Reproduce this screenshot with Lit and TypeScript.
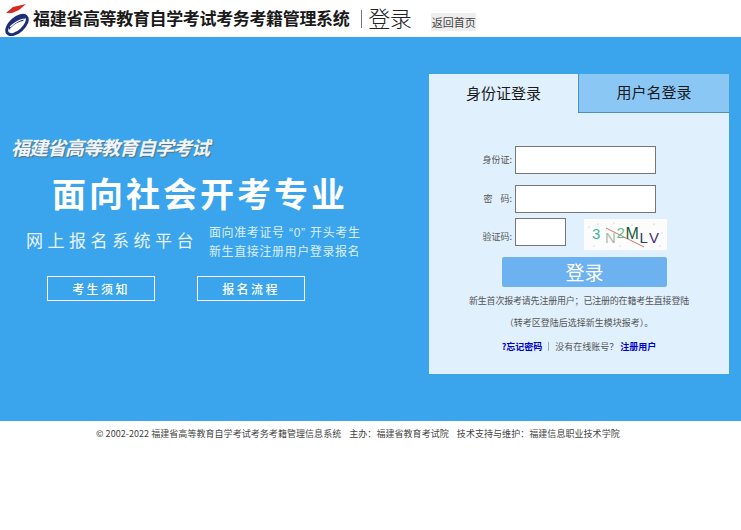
import { LitElement, html, css } from "lit";
import { customElement } from "lit/decorators.js";

@customElement("app-root")
export class AppRoot extends LitElement {
  static styles = css`
    :host { display: block; width: 741px; height: 530px; background: #fff; overflow: hidden;
      font-family: "Noto Sans CJK SC", "Liberation Sans", sans-serif; color: #333; }
    .head { height: 37px; display: flex; align-items: center; padding-left: 2px; box-sizing: border-box; }
    .logo { width: 28px; height: 34px; flex: none; margin-right: 3px; }
    .name { font-size: 17px; font-weight: 700; color: #1a1a1a; letter-spacing: -0.35px; white-space: nowrap; line-height: 20px; margin-bottom: 1px; }
    .sep { width: 1px; height: 18px; background: #777; margin: 0 6px 0 12px; }
    .page { font-size: 22px; font-weight: 300; color: #222; letter-spacing: -0.5px; line-height: 26px; width: 44px; margin-bottom: 3px; }
    .home { margin: 6px 0 0 19px; background: #eee; font-size: 11px; line-height: 18px; padding: 0 0.5px; color: #444; }
    .band { height: 384px; background: #3aa5ec; display: flex; }
    .left { width: 429px; flex: none; color: #fff; box-sizing: border-box; padding-top: 98px; }
    .slogan { margin-left: 11px; font-size: 19px; line-height: 24px; font-weight: 700; font-style: italic; letter-spacing: -1px; color: #eef6fc; text-shadow: 1px 1px 1px #5c6f80; white-space: nowrap; }
    .big { margin: 14px 0 0 52px; font-size: 34px; line-height: 40px; font-weight: 700; letter-spacing: 3px; white-space: nowrap; }
    .sub { display: flex; margin: 11px 0 0 26px; align-items: center; }
    .platform { width: 183px; font-size: 17px; line-height: 24px; margin-top: -6px; letter-spacing: 4.5px; color: #e8f4fd; white-space: nowrap; }
    .notes { font-family: "Liberation Sans", "Noto Sans CJK SC", sans-serif; font-size: 12px; line-height: 19px; letter-spacing: 0.6px; color: #dceefb; white-space: nowrap; }
    .notes span { padding: 0 4.5px; }
    .links { display: flex; gap: 42px; margin: 14px 0 0 47px; }
    .links a { width: 108px; height: 25px; box-sizing: border-box; border: 1px solid #fff; display: flex; align-items: center; justify-content: center; font-size: 12px; letter-spacing: 2.4px; color: #fff; font-weight: 500; }
    .panel { width: 300px; height: 300px; margin-top: 37px; background: #e0f0fc; flex: none; }
    .tabs { display: flex; height: 39px; }
    .tab { width: 149px; font-size: 15px; line-height: 38px; text-align: center; color: #1a1a1a; flex: none; }
    .tab.off { width: 151px; background: #8ac7f5; border-left: 1px solid #4c8fc4; border-bottom: 1px solid #4c8fc4; box-sizing: border-box; line-height: 36px; }
    .form { padding: 33px 0 0 3px; }
    .row { display: flex; align-items: center; margin-bottom: 11px; }
    .row.code-row { align-items: flex-start; margin-bottom: 0; }
    .row.tight { margin-bottom: 5px; }
    .label { width: 83px; box-sizing: border-box; flex: none; font-size: 9px; line-height: 12px; color: #555; text-align: right; padding-right: 3px; white-space: pre; }
    .code-row .label { margin-top: 13px; }
    .input { height: 28px; box-sizing: border-box; border: 1px solid #767676; background: #fff; }
    .full { width: 141px; }
    .code { width: 51px; margin-right: 18px; }
    .captcha { width: 83px; height: 31px; display: block; margin-top: 1px; flex: none; }
    .submit { display: block; width: 165px; height: 30px; margin: 7px 0 0 73px; background: #6cb1f0; border-radius: 2px; color: #fff; text-align: center; font-size: 19px; line-height: 30px; }
    .tip { font-size: 9px; line-height: 12px; color: #555; text-align: center; white-space: nowrap; }
    .tip.a { margin-top: 8px; letter-spacing: -0.2px; }
    .tip.b { margin-top: 10px; }
    .tip.c { margin-top: 12px; }
    .tip b { color: #0000cc; font-weight: 700; }
    .tip i { display: inline-block; width: 1px; height: 9px; background: #aaa; margin: 0 6px; vertical-align: -1px; }
    .foot { font-size: 9px; line-height: 12px; margin-top: 7px; padding-left: 96px; color: #444; white-space: nowrap; letter-spacing: 0.05px; }
    .foot span { margin-left: 8px; }
  `;

  render() {
    return html`
      <div class="head">
        <svg class="logo" viewBox="0 0 28 34">
          <path d="M4 11 L11 5 L24 2 L17 8 L10 11 Z" fill="#d9281e"/>
          <ellipse cx="15" cy="23" rx="12.5" ry="6.5" transform="rotate(-42 15 23)" fill="none" stroke="#1c2d78" stroke-width="3"/>
          <path d="M7 22 C12 17 18 14 25 13 L21 19 C15 20 11 23 7 28 Z" fill="#1c2d78"/>
          <path d="M8 25 C12 21 17 18 22 17" fill="none" stroke="#fff" stroke-width="1.2"/>
        </svg>
        <span class="name">福建省高等教育自学考试考务考籍管理系统</span>
        <span class="sep"></span>
        <span class="page">登录</span>
        <span class="home">返回首页</span>
      </div>
      <div class="band">
        <div class="left">
          <div class="slogan">福建省高等教育自学考试</div>
          <div class="big">面向社会开考专业</div>
          <div class="sub">
            <div class="platform">网上报名系统平台</div>
            <div class="notes">面向准考证号<span>“0”</span>开头考生<br />新生直接注册用户登录报名</div>
          </div>
          <div class="links"><a>考生须知</a><a>报名流程</a></div>
        </div>
        <div class="panel">
          <div class="tabs"><div class="tab">身份证登录</div><div class="tab off">用户名登录</div></div>
          <div class="form">
            <div class="row"><span class="label">身份证:</span><div class="input full"></div></div>
            <div class="row tight"><span class="label">密    码:</span><div class="input full"></div></div>
            <div class="row code-row">
              <span class="label">验证码:</span><div class="input code"></div>
              <svg class="captcha" viewBox="0 0 83 31">
                <rect width="83" height="31" fill="#fbfcfb"/>
                <line x1="22" y1="9" x2="60" y2="28" stroke="#c9786f" stroke-width="1"/>
                <text x="8" y="20" font-size="15" font-family="Liberation Sans" fill="#3fb39a">3</text>
                <text x="21" y="24" font-size="15" font-family="Liberation Sans" fill="#a9bca8">N</text>
                <text x="32.5" y="19" font-size="15" font-family="Liberation Sans" fill="#5fbf8e">2</text>
                <text x="41.5" y="20" font-size="16" font-family="Liberation Sans" fill="#1e5a36">M</text>
                <text x="55.5" y="24" font-size="15" font-family="Liberation Sans" fill="#2b3f6e">L</text>
                <text x="65" y="24" font-size="15" font-family="Liberation Sans" fill="#4a2f70">V</text>
                <g fill="#9aa"><circle cx="5" cy="8" r=".5"/><circle cx="14" cy="5" r=".5"/><circle cx="30" cy="4" r=".5"/><circle cx="48" cy="6" r=".5"/><circle cx="70" cy="5" r=".5"/><circle cx="78" cy="14" r=".5"/><circle cx="10" cy="27" r=".5"/><circle cx="36" cy="27" r=".5"/><circle cx="76" cy="27" r=".5"/></g>
              </svg>
            </div>
          </div>
          <div class="submit">登录</div>
          <div class="tip a">新生首次报考请先注册用户；已注册的在籍考生直接登陆</div>
          <div class="tip b">（转考区登陆后选择新生模块报考）。</div>
          <div class="tip c"><b>?忘记密码</b><i></i>没有在线账号？ <b>注册用户</b></div>
        </div>
      </div>
      <div class="foot">© 2002-2022 福建省高等教育自学考试考务考籍管理信息系统<span>主办：福建省教育考试院</span><span>技术支持与维护：福建信息职业技术学院</span></div>
    `;
  }
}
